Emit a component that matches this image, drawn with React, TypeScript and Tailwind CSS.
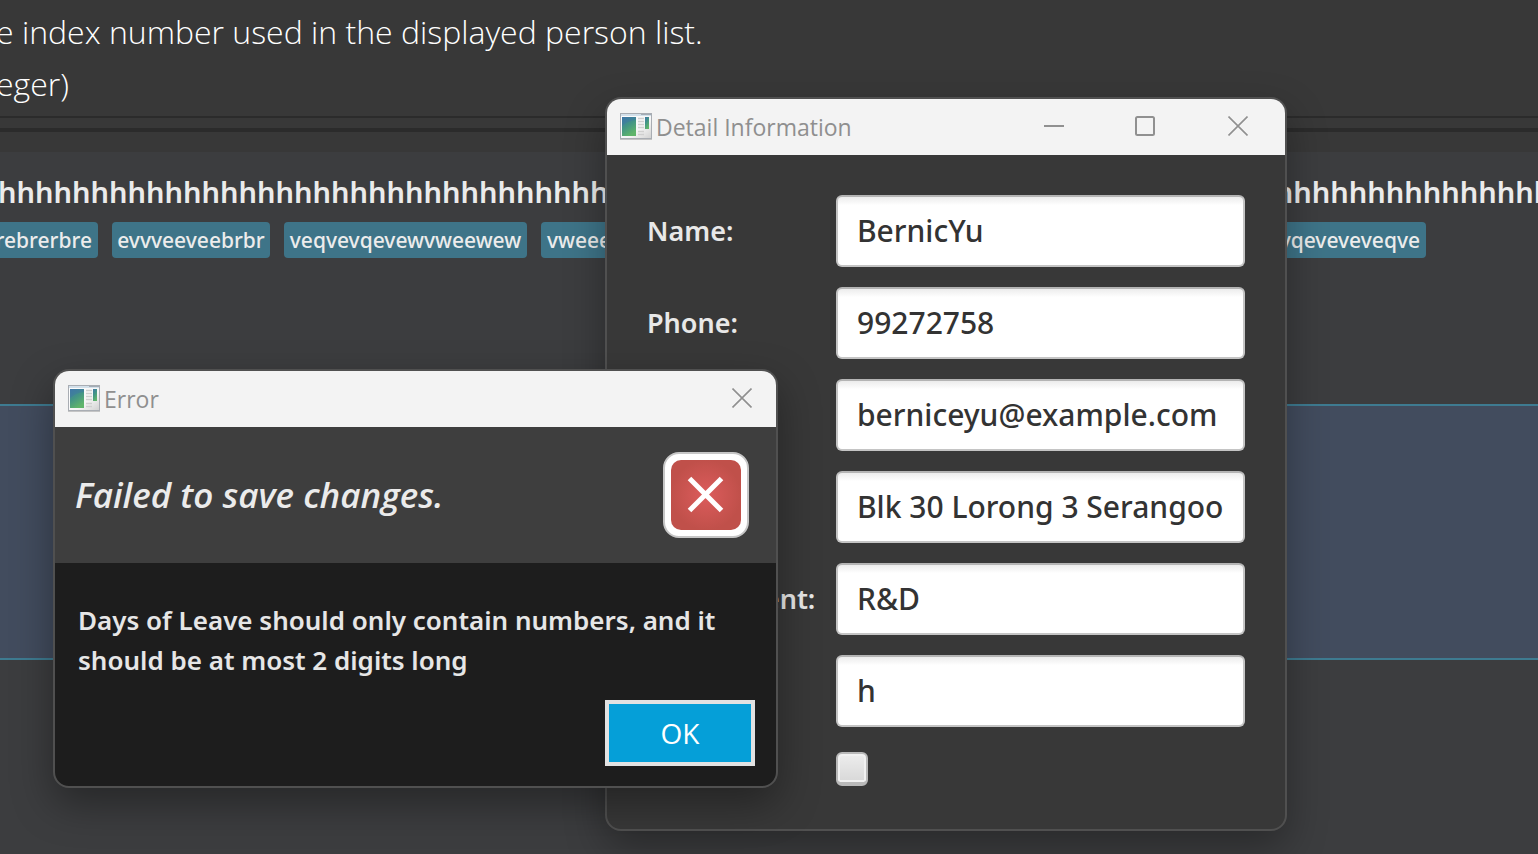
import { useState } from 'react';

const NAME_RUN = 'h'.repeat(90);

function AppIcon() {
  return (
    <svg viewBox="0 0 32 27" className="h-[27px] w-8 shrink-0" aria-hidden="true">
      <defs>
        <linearGradient id="pane" x1="0" y1="0" x2="0.5" y2="1">
          <stop offset="0" stopColor="#3f77a8" />
          <stop offset="0.5" stopColor="#439486" />
          <stop offset="1" stopColor="#5fb56a" />
        </linearGradient>
        <linearGradient id="frame" x1="0" y1="0" x2="1" y2="1">
          <stop offset="0" stopColor="#ffffff" />
          <stop offset="0.6" stopColor="#f6f6f6" />
          <stop offset="1" stopColor="#d0d0d0" />
        </linearGradient>
      </defs>
      <rect x="0.5" y="0.5" width="31" height="25" fill="url(#frame)" stroke="#a9adb3" />
      <path d="M0 26.5h32" stroke="#c4c4c4" />
      <path d="M1 2h30" stroke="#d3e0ea" strokeWidth="2" />
      <path d="M21 1.5h10" stroke="#a3acb5" />
      <rect x="2" y="4" width="14" height="19" fill="url(#pane)" />
      <path d="M2 13c4-4 9-5.500 14-6V4H2z" fill="#3d76a6" opacity="0.45" />
      <path d="M18 5.500h6M18 8.500h6M18 11.500h6M18 14.500h6M18 18.500h6M18 21.500h6" stroke="#cfcfcf" strokeWidth="1.500" />
      <rect x="25" y="4" width="4" height="12" fill="url(#pane)" />
    </svg>
  );
}

function CloseGlyph() {
  return (
    <svg viewBox="0 0 20 20" className="size-5" aria-hidden="true">
      <path d="M0.500 0.500l19 19M19.500 0.500l-19 19" stroke="#909090" strokeWidth="1.600" fill="none" />
    </svg>
  );
}

function TitleBar({ title, resizable }: { title: string; resizable?: boolean }) {
  return (
    <header className="flex h-14 items-center bg-[#f3f3f3] pb-0.5 pl-[13px] text-[#8f8f8f]">
      <AppIcon />
      <h2 className="ml-1 flex-1 pt-0.5 text-[23px] leading-8">{title}</h2>
      {resizable && (
        <>
          <button type="button" aria-label="Minimize" className="flex h-full w-[90px] items-center justify-center">
            <svg viewBox="0 0 20 20" className="size-5" aria-hidden="true">
              <path d="M0 10h20" stroke="#909090" strokeWidth="2" />
            </svg>
          </button>
          <button type="button" aria-label="Maximize" className="flex h-full w-[92px] items-center justify-center">
            <svg viewBox="0 0 20 20" className="size-5" aria-hidden="true">
              <rect x="1" y="1" width="18" height="18" rx="1.500" stroke="#909090" strokeWidth="2" fill="none" />
            </svg>
          </button>
        </>
      )}
      <button
        type="button"
        aria-label="Close"
        className={resizable ? 'flex h-full w-[94px] items-center justify-center' : 'flex h-full w-[68px] items-center justify-center'}
      >
        <CloseGlyph />
      </button>
    </header>
  );
}

const FIELDS = [
  { id: 'name', label: 'Name:', value: 'BernicYu' },
  { id: 'phone', label: 'Phone:', value: '99272758' },
  { id: 'email', label: 'Email:', value: 'berniceyu@example.com' },
  { id: 'address', label: 'Address:', value: 'Blk 30 Lorong 3 Serangoon Gardens, #07-18' },
  { id: 'department', label: 'Department:', value: 'R&D' },
  { id: 'leave', label: 'Leave:', value: 'h' },
];

function DetailWindow() {
  const [remote, setRemote] = useState(false);
  return (
    <section
      aria-label="Detail Information"
      className="absolute top-[97px] left-[605px] w-[682px] overflow-hidden rounded-2xl border-2 border-[#505050] bg-[#383838] shadow-[0_16px_40px_rgba(0,0,0,0.32)]"
    >
      <TitleBar title="Detail Information" resizable />
      <form className="grid grid-cols-[169px_1fr] gap-5 px-10 pt-10 pb-[38px] font-medium [font-family:'Noto_Sans',sans-serif]">
        {FIELDS.map((f) => (
          <div key={f.id} className="contents">
            <label htmlFor={f.id} className="self-center text-[27px] leading-9 font-semibold whitespace-nowrap text-[#e8e8e8]">
              {f.label}
            </label>
            <input
              id={f.id}
              type="text"
              defaultValue={f.value}
              className="h-[72px] w-full min-w-0 rounded-md border-2 border-[#c4c4c4] border-t-[#b4b4b4] bg-white bg-linear-to-b from-[#ececec] to-white to-12% px-[19px] pb-0.5 text-[30px] text-[#333333] outline-none"
            />
          </div>
        ))}
        <label htmlFor="remote" className="self-center text-[27px] leading-9 font-semibold text-[#e8e8e8]">
          Remote:
        </label>
        <div className="flex h-11 items-center">
          <input
            id="remote"
            type="checkbox"
            checked={remote}
            onChange={(e) => setRemote(e.target.checked)}
            className="h-[34px] w-8 appearance-none rounded-md border-2 border-b-4 border-[#b9b9b9] bg-linear-to-b from-[#ededed] to-[#d8d8d8] shadow-[inset_0_0_0_2px_#f1f1f1]"
          />
        </div>
      </form>
    </section>
  );
}

function ErrorDialog() {
  return (
    <section
      role="alertdialog"
      aria-label="Error"
      className="absolute top-[369px] left-[53px] w-[725px] overflow-hidden rounded-2xl border-2 border-[#505050] bg-[#1d1d1d] shadow-[0_16px_40px_rgba(0,0,0,0.36)]"
    >
      <TitleBar title="Error" />
      <div className="flex h-[136px] items-center justify-between bg-[#3e3e3e] pr-[27px] pl-5">
        <p className="text-[35px] leading-10 font-semibold text-[#ebebeb] italic">Failed to save changes.</p>
        <svg viewBox="0 0 86 86" className="size-[86px]" role="img" aria-label="Error">
          <defs>
            <radialGradient id="alert">
              <stop offset="0" stopColor="#dc5c5c" />
              <stop offset="1" stopColor="#c0504a" />
            </radialGradient>
          </defs>
          <rect x="1" y="1" width="84" height="84" rx="15" fill="#fff" stroke="#c6c6c6" strokeWidth="2" />
          <rect x="8" y="8" width="70" height="70" rx="10" fill="url(#alert)" />
          <path d="M26.500 26.500l32 32M58.500 26.500l-32 32" stroke="#fff" strokeWidth="5" />
        </svg>
      </div>
      <div className="pt-[37px] pr-[21px] pb-5 pl-[23px]">
        <p className="text-[26px] leading-10 font-semibold text-[#e6e6e6] [font-family:'Noto_Sans',sans-serif]">
          Days of Leave should only contain numbers, and it
          <br />
          should be at most 2 digits long
        </p>
        <div className="mt-5 flex justify-end">
          <button type="button" className="h-[66px] w-[150px] border-4 border-[#e2e2e2] bg-[#059fd8] text-[28px] text-white">
            OK
          </button>
        </div>
      </div>
    </section>
  );
}

export default function App() {
  return (
    <main className="relative flex min-h-screen flex-col overflow-hidden bg-[#3c3d3f] font-['Open_Sans','Noto_Sans',sans-serif]">
      <div className="border-b-2 border-[#2b2b2b] bg-[#383838] pt-1.5 pb-1.5 text-[32px] leading-[52px] font-light whitespace-nowrap text-white">
        <div className="-ml-1">
          <p>e index number used in the displayed person list.</p>
          <p>eger)</p>
        </div>
      </div>
      <div className="h-[14px] border-b-4 border-[#2b2b2b] bg-[#383838]" />
      <div className="h-5 bg-[#383838]" />
      <ul>
        <li className="h-[252px] bg-[#3c3d3f] pt-5 font-medium [font-family:'Noto_Sans',sans-serif]">
          <p className="overflow-hidden text-[29px] leading-10 font-semibold whitespace-nowrap text-[#ebebeb]">
            <span className="-ml-0.5">{NAME_RUN}</span>
          </p>
          <div className="mt-2.5 flex gap-[14px] pr-28 text-[21px] leading-9 whitespace-nowrap text-[#ececec]">
            <span className="flex w-[98px] justify-end overflow-hidden rounded-r bg-[#3e7488] pr-1.5">rebrerbre</span>
            <span className="w-[158px] rounded bg-[#3e7488] text-center">evvveeveebrbr</span>
            <span className="w-[243px] rounded bg-[#3e7488] text-center">veqvevqevewvweewew</span>
            <span className="flex-1 rounded bg-[#3e7488] px-1.5">vweeewvev</span>
            <span className="w-[158px] rounded bg-[#3e7488] pr-1.5 text-right">evqeveveveqve</span>
          </div>
        </li>
        <li className="h-64 border-y-2 border-[#3e7b91] bg-[#424c5e]" />
      </ul>
      <DetailWindow />
      <ErrorDialog />
    </main>
  );
}
